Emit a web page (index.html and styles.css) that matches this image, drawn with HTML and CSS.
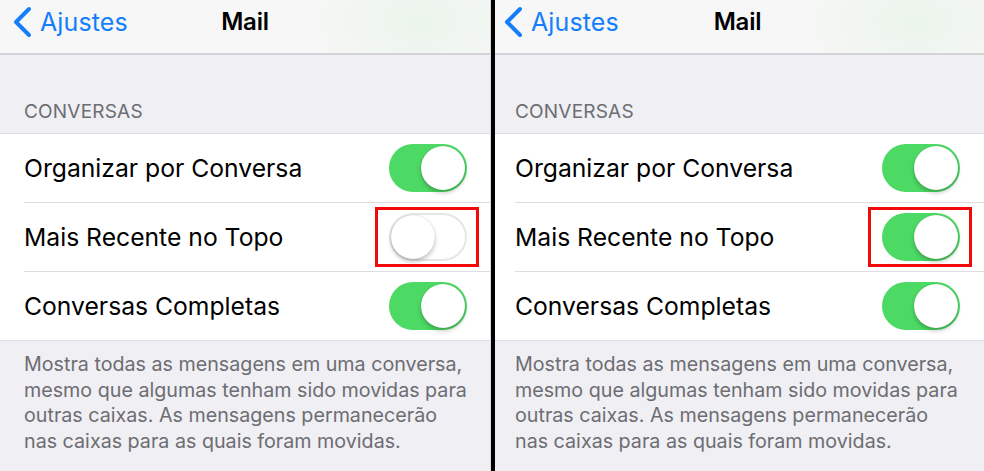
FILE: index.html
```html
<!DOCTYPE html>
<html lang="pt-BR">
<head>
<meta charset="utf-8">
<title>Mail – Conversas</title>
<link rel="stylesheet" href="styles.css">
</head>
<body>
<div class="screens">
  <section class="phone phone--left">
    <header class="nav">
      <a class="nav__back">
        <svg class="nav__chevron" viewBox="0 0 22 32" width="22" height="32"><polyline points="18,3 5,16 18,29" fill="none" stroke="#157efb" stroke-width="4" stroke-linecap="round" stroke-linejoin="round"/></svg>
        <span>Ajustes</span>
      </a>
      <h1 class="nav__title">Mail</h1>
    </header>
    <div class="group-header">CONVERSAS</div>
    <ul class="list">
      <li class="row"><span class="row__label">Organizar por Conversa</span><span class="switch switch--on"></span></li>
      <li class="row"><span class="row__label">Mais Recente no Topo</span><span class="switch switch--off switch--marked"></span></li>
      <li class="row"><span class="row__label">Conversas Completas</span><span class="switch switch--on"></span></li>
    </ul>
    <p class="group-footer">Mostra todas as mensagens em uma conversa,<br>mesmo que algumas tenham sido movidas para<br>outras caixas. As mensagens permanecerão<br>nas caixas para as quais foram movidas.</p>
  </section>
  <div class="divider"></div>
  <section class="phone phone--right">
    <header class="nav">
      <a class="nav__back">
        <svg class="nav__chevron" viewBox="0 0 22 32" width="22" height="32"><polyline points="18,3 5,16 18,29" fill="none" stroke="#157efb" stroke-width="4" stroke-linecap="round" stroke-linejoin="round"/></svg>
        <span>Ajustes</span>
      </a>
      <h1 class="nav__title">Mail</h1>
    </header>
    <div class="group-header">CONVERSAS</div>
    <ul class="list">
      <li class="row"><span class="row__label">Organizar por Conversa</span><span class="switch switch--on"></span></li>
      <li class="row"><span class="row__label">Mais Recente no Topo</span><span class="switch switch--on switch--marked"></span></li>
      <li class="row"><span class="row__label">Conversas Completas</span><span class="switch switch--on"></span></li>
    </ul>
    <p class="group-footer">Mostra todas as mensagens em uma conversa,<br>mesmo que algumas tenham sido movidas para<br>outras caixas. As mensagens permanecerão<br>nas caixas para as quais foram movidas.</p>
  </section>
</div>
</body>
</html>
```
FILE: styles.css
```css
* { box-sizing: border-box; }
html, body { margin: 0; padding: 0; }
body {
  width: 984px;
  height: 471px;
  overflow: hidden;
  background: #efeff4;
  font-family: Inter, "Liberation Sans", sans-serif;
  color: #000;
}
.screens {
  display: flex;
  height: 471px;
}
.phone {
  --inset: 24px;
  --right: 23px;
  height: 100%;
  background: #efeff4;
  display: flex;
  flex-direction: column;
}
.phone--left {
  width: 491px;
  border-right: 1px solid #dcdce0;
}
.phone--right {
  flex: 1;
  --inset: 20px;
  --right: 24px;
}
.divider {
  width: 4px;
  background: #000;
}
.nav {
  position: relative;
  height: 55px;
  flex: none;
  background:
    radial-gradient(ellipse 120px 70px at 420px 22px, rgba(220, 242, 220, 0.45), rgba(220, 242, 220, 0) 100%),
    #f7f7f7;
  border-bottom: 2px solid #d4d4d8;
  display: flex;
  align-items: center;
  justify-content: center;
}
.nav__back {
  position: absolute;
  left: calc(var(--inset) - 13px);
  top: 6px;
  display: flex;
  align-items: center;
  gap: 7px;
  color: #157efb;
  font-size: 25px;
  letter-spacing: 0.1px;
}
.nav__chevron { display: block; }
.nav__title {
  margin: 0 0 0 calc(var(--inset) - 24px);
  font-size: 24px;
  font-weight: 600;
  letter-spacing: -0.2px;
  padding-bottom: 10px;
}
.group-header {
  height: 78px;
  flex: none;
  padding: 45px 0 0 var(--inset);
  font-size: 19px;
  color: #6d6d72;
  letter-spacing: 0.2px;
}
.list {
  list-style: none;
  margin: 0;
  padding: 0;
  background: #fff;
  border-top: 1px solid #dedee2;
  border-bottom: 1px solid #dedee2;
  flex: none;
}
.row {
  height: 69px;
  margin-left: var(--inset);
  padding-right: var(--right);
  display: flex;
  align-items: center;
  justify-content: space-between;
  border-bottom: 1px solid #dedee2;
}
.row:last-child { border-bottom: none; height: 68px; }
.row__label {
  font-size: 24.7px;
}
.switch {
  position: relative;
  width: 78px;
  height: 48px;
  border-radius: 24px;
  flex: none;
}
.switch::before {
  content: "";
  position: absolute;
  top: 2px;
  width: 44px;
  height: 44px;
  border-radius: 50%;
  background: #fff;
  box-shadow: 0 3px 4px rgba(0, 0, 0, 0.22), 0 0 1px rgba(0, 0, 0, 0.25);
}
.switch--on { background: #4cd964; }
.switch--on::before { right: 2px; }
.switch--off {
  background: #fff;
  box-shadow: inset 0 0 0 2px #e6e6e6;
}
.switch--off::before { left: 2px; }
.switch--marked::after {
  content: "";
  position: absolute;
  left: -14px;
  right: -12px;
  top: -6px;
  bottom: -6px;
  border: 3px solid #f20a0a;
}
.group-footer {
  margin: 0;
  padding: 11px 8px 0 var(--inset);
  font-size: 19.7px;
  line-height: 25.7px;
  white-space: nowrap;
  color: #6d6d72;
}
```
